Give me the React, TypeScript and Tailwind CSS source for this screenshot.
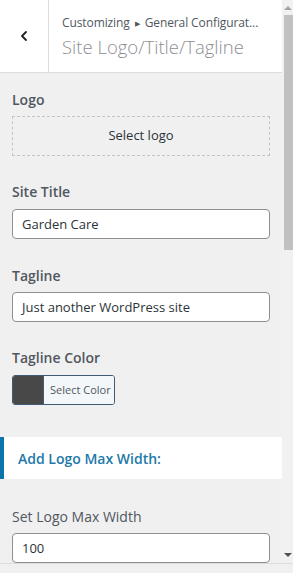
import { ChevronLeft } from "lucide-react";

const font = { fontFamily: "'Open Sans', 'Noto Sans', sans-serif" };

const Label = ({ children }: { children: React.ReactNode }) => (
  <div className="h-5 leading-5 text-[14px] font-semibold text-[#50575e]">{children}</div>
);

const Input = ({ value }: { value: string }) => (
  <div className="h-[30px] w-full rounded-[4px] border border-[#8c8f94] bg-white px-[9px] leading-[28px] text-[13px] text-[#2c3338]">
    {value}
  </div>
);

export default function App() {
  return (
    <div className="w-[293px] h-[573px] overflow-hidden bg-[#f0f0f1] flex flex-col" style={font}>
      <div className="h-[564px] flex border-b border-[#dcdcde]">
        <div className="w-[282px] flex flex-col overflow-hidden">
          <div className="h-[73px] shrink-0 bg-white border-b border-[#dcdcde] flex">
            <div className="w-[49px] border-r border-[#dcdcde] flex items-center justify-center">
              <ChevronLeft size={16} strokeWidth={2.75} className="text-[#1d2327]" />
            </div>
            <div className="flex-1 pl-[13px] pt-[14px] min-w-0">
              <div className="text-[12px] leading-[18px] tracking-[-0.1px] text-[#50575e] whitespace-nowrap">
                Customizing <span className="text-[7px] align-[1px] px-[2px]">▶</span> General Configurat...
              </div>
              <div className="text-[18.5px] leading-[28px] font-light text-[#8c8f94] whitespace-nowrap">
                Site Logo/Title/Tagline
              </div>
            </div>
          </div>

          <div className="px-3 pt-[17px]">
            <Label>Logo</Label>
            <div className="mt-[6px] h-10 border border-dashed border-[#c3c4c7] flex items-center justify-center text-[13px] text-[#2c3338]">
              Select logo
            </div>

            <div className="mt-[26px]">
              <Label>Site Title</Label>
            </div>
            <div className="mt-[7px]">
              <Input value="Garden Care" />
            </div>

            <div className="mt-[27px]">
              <Label>Tagline</Label>
            </div>
            <div className="mt-[6px]">
              <Input value="Just another WordPress site" />
            </div>

            <div className="mt-[26px]">
              <Label>Tagline Color</Label>
            </div>
            <div className="mt-[7px] h-[30px] w-[103px] flex rounded-[3px] border border-[#3f5b76] overflow-hidden">
              <div className="w-[30px] bg-[#484848]" />
              <div className="flex-1 bg-[#f3f7fa] border-l border-[#3f5b76] flex items-center pl-[6px] text-[11px] text-[#50575e]">
                Select Color
              </div>
            </div>
          </div>

          <div className="mt-[32px] h-[42px] shrink-0 bg-white border-l-4 border-[#0a74ab] flex items-center pl-[14px] text-[14px] font-semibold text-[#1e78a8]">
            Add Logo Max Width:
          </div>

          <div className="px-3 pt-[28px]">
            <div className="h-5 leading-5 text-[14px] text-[#50575e]">Set Logo Max Width</div>
            <div className="mt-[6px]">
              <Input value="100" />
            </div>
          </div>
        </div>

        <div className="w-[11px] bg-[#f1f1f1] flex flex-col">
          <div className="h-[15px] flex items-center justify-center">
            <div className="w-0 h-0 border-x-[4px] border-x-transparent border-b-[4px] border-b-[#a3a3a3]" />
          </div>
          <div className="ml-[2px] h-[235px] bg-[#c1c1c1]" />
          <div className="flex-1" />
          <div className="h-[15px] flex items-center justify-center pb-[1px]">
            <div className="w-0 h-0 border-x-[4px] border-x-transparent border-t-[4px] border-t-[#505050]" />
          </div>
        </div>
      </div>
      <div className="flex-1" />
    </div>
  );
}
